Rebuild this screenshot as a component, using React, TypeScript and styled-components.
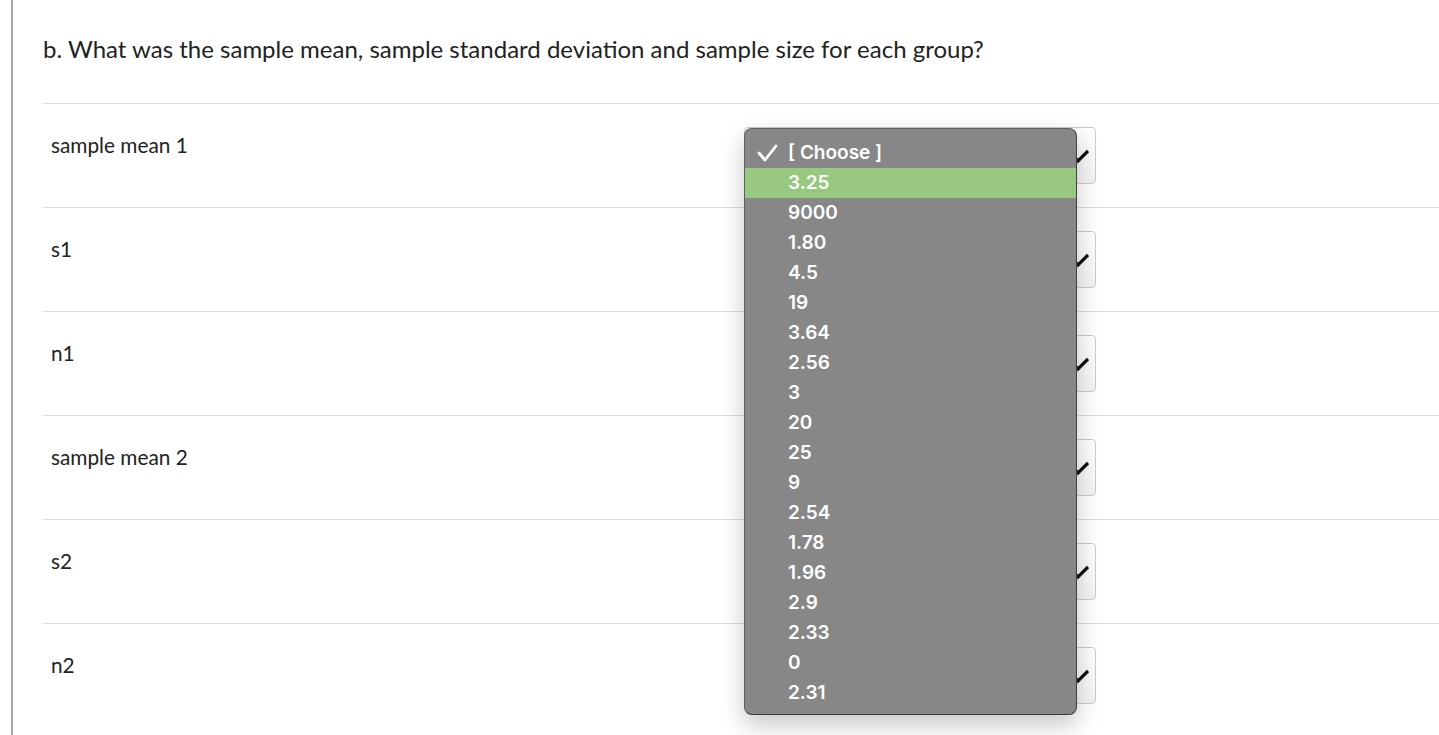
import React from "react";
import styled, { createGlobalStyle } from "styled-components";

const Global = createGlobalStyle`
  html, body { margin: 0; padding: 0; background: #ffffff; }
  body { font-family: Lato, "Open Sans", sans-serif; color: #2d3b45; overflow: hidden; }
  * { box-sizing: border-box; }
`;

const Page = styled.div`
  position: relative;
  width: 1439px;
  height: 735px;
  padding-left: 11px;
`;

const Frame = styled.div`
  border-left: 2px solid #a8a8a8;
  height: 735px;
  padding-left: 30px;
`;

const Title = styled.h2`
  margin: 0;
  padding-top: 34px;
  height: 103px;
  font-family: Lato, sans-serif;
  font-weight: 400;
  font-size: 24px;
  line-height: 30px;
  color: #222;
`;

const List = styled.div`
  display: flex;
  flex-direction: column;
`;

const Row = styled.div`
  display: flex;
  height: 104px;
  border-top: 1px solid #dcdcdc;
`;

const Label = styled.div`
  width: 701px;
  padding: 28px 8px 0;
  font-family: Lato, sans-serif;
  font-size: 20.8px;
  line-height: 26px;
  color: #222;
`;

const SelectBox = styled.div`
  position: relative;
  margin-top: 23px;
  width: 352px;
  height: 57px;
  border: 1px solid #c7cdd1;
  border-radius: 4px;
  background: linear-gradient(#ffffff, #f3f3f3);
`;

const Chevron = styled.svg`
  position: absolute;
  right: 6px;
  top: 20px;
`;

const Popup = styled.div`
  position: absolute;
  left: 744px;
  top: 128px;
  width: 333px;
  height: 587px;
  padding: 9px 0 8px;
  background: #878787;
  border: 1px solid #5e5e5e;
  border-bottom-color: #3a3a3a;
  border-right-color: #404040;
  border-radius: 8px;
  box-shadow: 0 10px 24px rgba(0, 0, 0, 0.22);
  overflow: hidden;
`;

const Option = styled.div<{ $active?: boolean }>`
  position: relative;
  height: 30px;
  padding: 0 0 2px 43px;
  display: flex;
  align-items: center;
  background: ${(p) => (p.$active ? "#98c87f" : "transparent")};
  font-family: Inter, "Liberation Sans", sans-serif;
  font-weight: 600;
  font-size: 19px;
  color: #ffffff;
`;

const Check = styled.svg`
  position: absolute;
  left: 12px;
  top: 5px;
`;

const labels = ["sample mean 1", "s1", "n1", "sample mean 2", "s2", "n2"];
const options = [
  "3.25", "9000", "1.80", "4.5", "19", "3.64", "2.56", "3", "20", "25",
  "9", "2.54", "1.78", "1.96", "2.9", "2.33", "0", "2.31",
];

export default function App() {
  return (
    <Page>
      <Global />
      <Frame>
        <Title>b. What was the sample mean, sample standard deviation and sample size for each group?</Title>
        <List>
          {labels.map((l) => (
            <Row key={l}>
              <Label>{l}</Label>
              <SelectBox>
                <Chevron width="24" height="18" viewBox="0 0 24 18">
                  <path d="M3 3 L13 13 L23 3" fill="none" stroke="#111" strokeWidth="3.2" />
                </Chevron>
              </SelectBox>
            </Row>
          ))}
        </List>
      </Frame>
      <Popup>
        <Option>
          <Check width="22" height="20" viewBox="0 0 22 20">
            <path d="M2 10 L8 17 L19 3" fill="none" stroke="#fff" strokeWidth="2.8" strokeLinecap="round" strokeLinejoin="round" />
          </Check>
          [ Choose ]
        </Option>
        {options.map((o, i) => (
          <Option key={i} $active={i === 0}>{o}</Option>
        ))}
      </Popup>
    </Page>
  );
}
